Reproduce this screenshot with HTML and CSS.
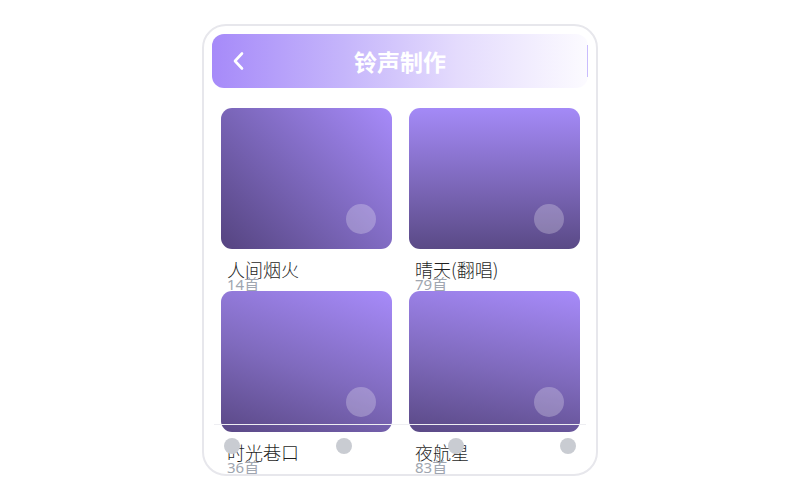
FILE: index.html
```html
<!DOCTYPE html>
<html lang="zh-CN">
<head>
<meta charset="utf-8">
<title>铃声制作</title>
<link rel="stylesheet" href="styles.css">
</head>
<body>
<div class="phone">
  <header class="topbar">
    <div class="topbar-left">
      <svg class="back" width="12" height="20" viewBox="0 0 12 20"><path d="M10 2.5 L3 10 L10 17.5" fill="none" stroke="#fff" stroke-width="2.6" stroke-linecap="round" stroke-linejoin="round"/></svg>
    </div>
    <h1 class="title">铃声制作</h1>
    <div class="topbar-right"><span class="edge"></span></div>
  </header>
  <main class="grid">
    <div class="item">
      <div class="cover c1"><span class="play"></span></div>
      <div class="name">人间烟火</div>
      <div class="count">14首</div>
    </div>
    <div class="item">
      <div class="cover c2"><span class="play"></span></div>
      <div class="name">晴天(翻唱)</div>
      <div class="count">79首</div>
    </div>
    <div class="item">
      <div class="cover c3"><span class="play"></span></div>
      <div class="name">时光巷口</div>
      <div class="count">36首</div>
    </div>
    <div class="item">
      <div class="cover c4"><span class="play"></span></div>
      <div class="name">夜航星</div>
      <div class="count">83首</div>
    </div>
  </main>
  <nav class="tabbar">
    <span class="dot"></span>
    <span class="dot"></span>
    <span class="dot"></span>
    <span class="dot"></span>
  </nav>
</div>
</body>
</html>
```
FILE: styles.css
```css
* { box-sizing: border-box; }
html, body { margin: 0; padding: 0; background: #fff; }
body {
  font-family: "Noto Sans", "Noto Sans CJK SC", sans-serif;
  padding-top: 24px;
}
.phone {
  position: relative;
  width: 396px;
  height: 452px;
  margin: 0 auto;
  border: 2px solid #e7e7ec;
  border-radius: 24px;
  padding: 8px;
  overflow: hidden;
  background: #fff;
}
.topbar {
  display: grid;
  grid-template-columns: 1fr auto 1fr;
  align-items: center;
  height: 54px;
  border-radius: 12px;
  background: linear-gradient(90deg, #a68af9 0%, #c5b5fb 35%, #e4dbfd 65%, #fcfbff 100%);
}
.topbar-left { display: flex; align-items: center; padding-left: 20px; }
.back { display: block; }
.title {
  margin: 0;
  font-family: "Noto Sans CJK SC", sans-serif;
  font-size: 23px;
  font-weight: 700;
  color: #fff;
  line-height: 1;
}
.topbar-right { display: flex; justify-content: flex-end; align-items: center; }
.edge { display: block; width: 1px; height: 32px; background: #c9bcfd; }
.grid {
  display: grid;
  grid-template-columns: 171px 171px;
  grid-auto-rows: 175px;
  column-gap: 17px;
  row-gap: 8px;
  padding: 20px 8px 0 9px;
}
.cover {
  position: relative;
  height: 141px;
  border-radius: 11px;
}
.c1 { background: linear-gradient(225deg, #a78bfa 0%, #7d68bd 50%, #554480 100%); }
.c2 { background: linear-gradient(180deg, #a48af7 0%, #7c67b9 55%, #5a4a86 100%); }
.c3 { background: linear-gradient(200deg, #a78bfa 0%, #7f6abd 55%, #5a4886 100%); }
.c4 { background: linear-gradient(190deg, #a78bfa 0%, #7e69bb 55%, #5a4986 100%); }
.play {
  position: absolute;
  right: 16px;
  bottom: 15px;
  width: 30px;
  height: 30px;
  border-radius: 50%;
  background: rgba(255, 255, 255, 0.25);
}
.name {
  margin-top: 10px;
  padding-left: 6px;
  font-family: "Noto Sans CJK SC", sans-serif;
  font-size: 18px;
  font-weight: 300;
  line-height: 20px;
  color: #1f1f1f;
  white-space: nowrap;
}
.count {
  margin-top: -2px;
  padding-left: 6px;
  font-family: "Noto Sans", "Noto Sans CJK SC", sans-serif;
  font-size: 15px;
  font-weight: 400;
  line-height: 14px;
  color: #a0a6b0;
}
.tabbar {
  position: absolute;
  left: 10px;
  right: 10px;
  bottom: 0;
  height: 50px;
  border-top: 1px solid #eeeef2;
  display: flex;
  justify-content: space-between;
  align-items: flex-start;
  padding: 13px 10px 0;
}
.dot {
  width: 16px;
  height: 16px;
  border-radius: 50%;
  background: #c9ccd2;
}
```
